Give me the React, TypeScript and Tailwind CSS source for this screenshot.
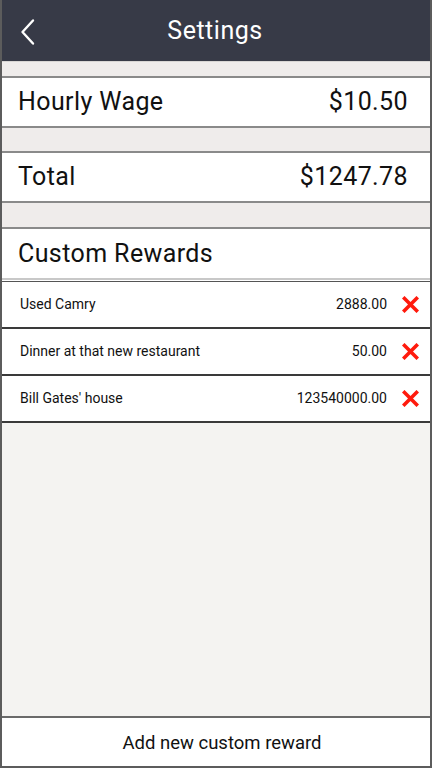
import React from "react";

const rewards = [
    { name: "Used Camry", cost: "2888.00" },
    { name: "Dinner at that new restaurant", cost: "50.00" },
    { name: "Bill Gates' house", cost: "123540000.00" },
];

const RedX = () => (
    <svg width="17" height="17" viewBox="0 0 17 17">
        <path d="M2.5 2.5 L14.5 14.5 M14.5 2.5 L2.5 14.5" stroke="#ff1a0d" strokeWidth="3.6" strokeLinecap="square" />
    </svg>
);

const SettingRow = ({ label, value }: { label: string; value?: string }) => (
    <div className="h-[52px] shrink-0 bg-white border-y-2 border-[#8a8a8a] flex items-center justify-between pl-[16px] pr-[22px] text-[25px] tracking-[0.4px] text-[#111]">
        <span>{label}</span>
        {value && <span>{value}</span>}
    </div>
);

export default function App() {
    return (
        <div
            className="w-[432px] h-[768px] flex flex-col bg-[#f4f3f1] border-x-2 border-b-2 border-[#5c5c5c] overflow-hidden"
            style={{ fontFamily: "Roboto, 'Noto Sans', sans-serif" }}
        >
            <header className="h-[61px] shrink-0 bg-[#373a47] relative flex items-center justify-center text-white text-[25px] tracking-[0.5px] -mx-[2px]">
                <svg className="absolute left-[19px] top-[18px]" width="18" height="28" viewBox="0 0 18 28">
                    <path d="M14 2.5 L3.5 14 L14 25.5" stroke="white" strokeWidth="2.4" fill="none" strokeLinecap="round" strokeLinejoin="round" />
                </svg>
                <span className="pr-[2px]">Settings</span>
            </header>
            <div className="h-[15px] shrink-0 bg-[#efeceb] border-t border-[#d8d6d4]" />
            <SettingRow label="Hourly Wage" value="$10.50" />
            <div className="h-[23px] shrink-0 bg-[#efeceb]" />
            <SettingRow label="Total" value="$1247.78" />
            <div className="h-[24px] shrink-0 bg-[#efeceb]" />
            <div className="h-[51px] shrink-0 bg-white border-t-2 border-[#8a8a8a] flex items-center pl-[16px] text-[25px] tracking-[0.4px] text-[#111]">
                Custom Rewards
            </div>
            <div className="h-[2px] shrink-0 bg-[#c8c8c8]" />
            <div className="h-[2px] shrink-0 bg-white border-b border-[#555]" />
            {rewards.map((r) => (
                <div key={r.name} className="h-[47px] shrink-0 bg-white border-b-2 border-[#3a3a3a] flex items-center pl-[18px] pr-[11px] text-[14px] text-[#111]">
                    <span className="flex-1">{r.name}</span>
                    <span>{r.cost}</span>
                    <span className="ml-[15px] flex items-center"><RedX /></span>
                </div>
            ))}
            <div className="flex-1" />
            <div className="h-[50px] shrink-0 bg-white border-t-2 border-[#6a6a6a] flex items-center justify-center pl-[12px] pt-[3px] text-[18.5px] text-[#111]">
                Add new custom reward
            </div>
        </div>
    );
}
